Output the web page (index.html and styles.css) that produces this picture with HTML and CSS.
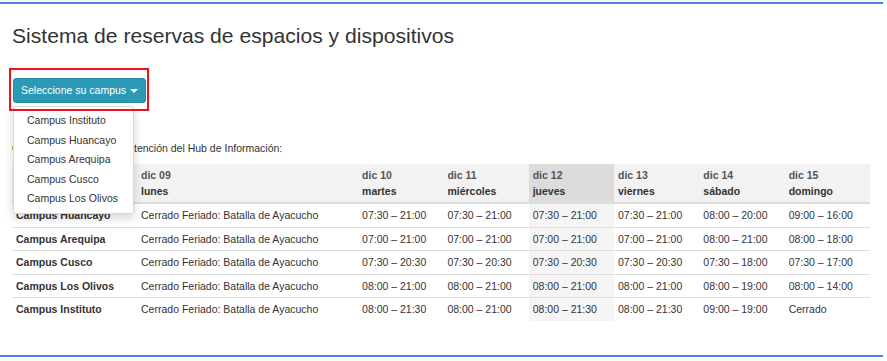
FILE: index.html
```html
<!DOCTYPE html>
<html lang="es">
<head>
<meta charset="utf-8">
<title>Sistema de reservas de espacios y dispositivos</title>
<link rel="stylesheet" href="styles.css">
</head>
<body>
<div class="frame">
  <div class="page">
    <h1 class="title">Sistema de reservas de espacios y dispositivos</h1>
    <div class="campus-select">
      <button class="btn-campus" type="button">Seleccione su campus<span class="caret"></span></button>
      <ul class="dropdown">
        <li>Campus Instituto</li>
        <li>Campus Huancayo</li>
        <li>Campus Arequipa</li>
        <li>Campus Cusco</li>
        <li>Campus Los Olivos</li>
      </ul>
      <div class="highlight-box"></div>
    </div>
    <p class="intro">Consulte los horarios de atención del Hub de Información:</p>
    <table class="hours">
      <colgroup>
        <col class="c-campus"><col class="c-lunes"><col class="c-day"><col class="c-day"><col class="c-day"><col class="c-day"><col class="c-day"><col class="c-day">
      </colgroup>
      <thead>
        <tr>
          <th></th>
          <th><span class="date">dic 09</span><span class="dow">lunes</span></th>
          <th><span class="date">dic 10</span><span class="dow">martes</span></th>
          <th><span class="date">dic 11</span><span class="dow">miércoles</span></th>
          <th class="today"><span class="date">dic 12</span><span class="dow">jueves</span></th>
          <th><span class="date">dic 13</span><span class="dow">viernes</span></th>
          <th><span class="date">dic 14</span><span class="dow">sábado</span></th>
          <th><span class="date">dic 15</span><span class="dow">domingo</span></th>
        </tr>
      </thead>
      <tbody>
        <tr>
          <th>Campus Huancayo</th>
          <td>Cerrado Feriado: Batalla de Ayacucho</td>
          <td>07:30 – 21:00</td><td>07:30 – 21:00</td><td class="today">07:30 – 21:00</td><td>07:30 – 21:00</td><td>08:00 – 20:00</td><td>09:00 – 16:00</td>
        </tr>
        <tr>
          <th>Campus Arequipa</th>
          <td>Cerrado Feriado: Batalla de Ayacucho</td>
          <td>07:00 – 21:00</td><td>07:00 – 21:00</td><td class="today">07:00 – 21:00</td><td>07:00 – 21:00</td><td>08:00 – 21:00</td><td>08:00 – 18:00</td>
        </tr>
        <tr>
          <th>Campus Cusco</th>
          <td>Cerrado Feriado: Batalla de Ayacucho</td>
          <td>07:30 – 20:30</td><td>07:30 – 20:30</td><td class="today">07:30 – 20:30</td><td>07:30 – 20:30</td><td>07:30 – 18:00</td><td>07:30 – 17:00</td>
        </tr>
        <tr>
          <th>Campus Los Olivos</th>
          <td>Cerrado Feriado: Batalla de Ayacucho</td>
          <td>08:00 – 21:00</td><td>08:00 – 21:00</td><td class="today">08:00 – 21:00</td><td>08:00 – 21:00</td><td>08:00 – 19:00</td><td>08:00 – 14:00</td>
        </tr>
        <tr>
          <th>Campus Instituto</th>
          <td>Cerrado Feriado: Batalla de Ayacucho</td>
          <td>08:00 – 21:30</td><td>08:00 – 21:00</td><td class="today">08:00 – 21:30</td><td>08:00 – 21:30</td><td>09:00 – 19:00</td><td>Cerrado</td>
        </tr>
      </tbody>
    </table>
  </div>
</div>
</body>
</html>
```

FILE: styles.css
```css
* { box-sizing: border-box; }

html, body {
  margin: 0;
  padding: 0;
  background: #ffffff;
}

body {
  font-family: "Liberation Sans", Arial, Helvetica, sans-serif;
  font-size: 10.5px;
  color: #333333;
}

.frame {
  width: 883px;
  height: 355px;
  margin-top: 2px;
  border-top: 2px solid #4a86e8;
  border-bottom: 2px solid #4a86e8;
}

.page {
  padding-left: 12px;
}

.title {
  margin: 20px 0 0 0;
  font-size: 21.1px;
  line-height: 24px;
  font-weight: normal;
  color: #333333;
}

.campus-select {
  position: relative;
  margin: 30px 0 0 1px;
  height: 25px;
}

.btn-campus {
  display: block;
  height: 25px;
  margin: 0;
  padding: 4px 7px;
  font-family: inherit;
  font-size: 10.5px;
  line-height: 15px;
  color: #ffffff;
  background: #2b9ab7;
  border: 1px solid #258aa5;
  border-radius: 3px;
}

.caret {
  display: inline-block;
  width: 0;
  height: 0;
  margin-left: 4px;
  vertical-align: middle;
  border-top: 4px solid #ffffff;
  border-left: 4px solid transparent;
  border-right: 4px solid transparent;
}

.dropdown {
  position: absolute;
  top: 28px;
  left: 0;
  z-index: 3;
  width: 121px;
  margin: 0;
  padding: 4px 0;
  list-style: none;
  background: #ffffff;
  border: 1px solid rgba(0, 0, 0, 0.15);
  border-radius: 3px;
  box-shadow: 0 4px 10px rgba(0, 0, 0, 0.17);
}

.dropdown li {
  padding: 0 13px;
  line-height: 19.5px;
  color: #333333;
  white-space: nowrap;
}

.highlight-box {
  position: absolute;
  left: -4px;
  top: -10px;
  width: 140px;
  height: 43px;
  z-index: 4;
  border: 2px solid #e8141a;
  pointer-events: none;
}

.intro {
  margin: 37px 0 0 0;
  line-height: 16px;
}

.hours {
  margin-top: 8px;
  width: 858px;
  table-layout: fixed;
  border-collapse: collapse;
  border-spacing: 0;
}

.c-campus { width: 125px; }
.c-lunes { width: 221px; }
.c-day { width: 85.3px; }

.hours th,
.hours td {
  padding: 3px 4px;
  line-height: 16px;
  text-align: left;
  vertical-align: top;
  white-space: nowrap;
  color: #333333;
}

.hours tbody th,
.hours tbody td {
  line-height: 16.5px;
}

.hours thead th {
  background: #f2f2f2;
  border-bottom: 2px solid #dddddd;
  font-weight: bold;
}

.hours thead th.today {
  background: #dcdcdc;
}

.hours .date,
.hours .dow {
  display: block;
}

.hours .date {
  color: #555555;
}

.hours tbody tr + tr th,
.hours tbody tr + tr td {
  border-top: 1px solid #dddddd;
}

.hours tbody th {
  font-weight: bold;
}

.hours tbody td {
  font-weight: normal;
}

.hours tbody td.today {
  background: #f5f5f5;
}
```
